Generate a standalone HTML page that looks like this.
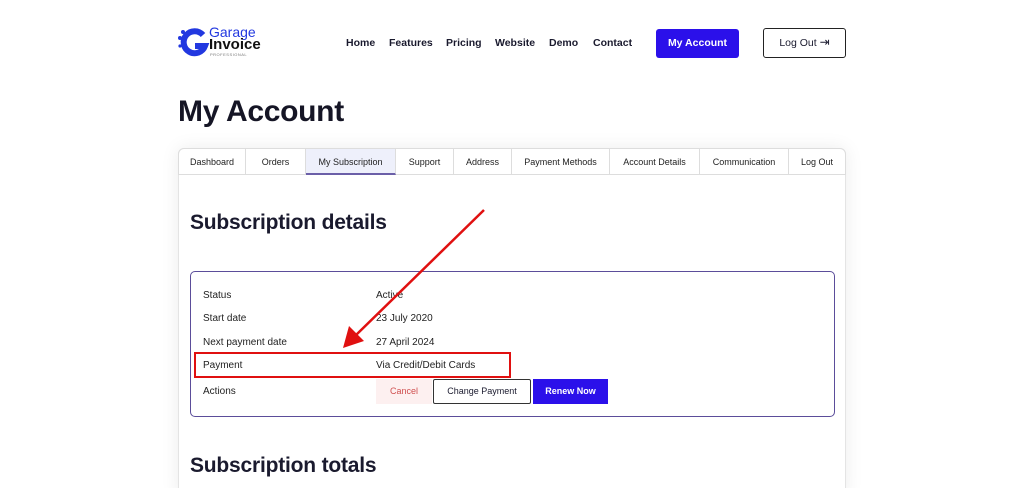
<!DOCTYPE html>
<html><head><meta charset="utf-8"><style>
*{margin:0;padding:0;box-sizing:border-box}
html{width:1024px;height:488px;overflow:hidden}
body{width:1024px;height:488px;overflow:hidden;background:#fff;font-family:"Liberation Sans",sans-serif;color:#1a1a2e;position:relative}
.abs{position:absolute}
.nav a{position:absolute;top:37px;font-size:10.5px;color:#1a1a2e;font-weight:bold;white-space:nowrap}
.tabs{position:absolute;left:178px;top:148px;width:668px;height:27px;border:1px solid #ddd;border-radius:6px 6px 0 0;display:flex;font-size:9px;background:#fff}
.tabs div{height:26px;line-height:26px;text-align:center;border-right:1px solid #ddd;color:#222}
.tabs div:last-child{border-right:none}
.row{position:absolute;font-size:10px;color:#222}
</style></head><body>
<svg class="abs" style="left:177px;top:26px" width="34" height="34" viewBox="0 0 34 34">
<circle cx="3" cy="12" r="2" fill="#2238e0"/><circle cx="6" cy="6" r="2" fill="#2238e0"/><circle cx="3" cy="20" r="1.6" fill="#2238e0"/>
<path d="M26 9 A11 11 0 1 0 28 20 L18 20" fill="none" stroke="#2238e0" stroke-width="6"/>
</svg>
<div class="abs" style="left:209px;top:26px;font-size:14px;color:#2238e0;line-height:13px">Garage</div>
<div class="abs" style="left:209px;top:38px;font-size:15px;font-weight:bold;color:#111;line-height:14px">Invoice</div>
<div class="abs" style="left:210px;top:52px;font-size:4px;color:#777;letter-spacing:0.5px">PROFESSIONAL</div>
<div class="nav">
<a style="left:346px">Home</a><a style="left:389px">Features</a><a style="left:446px">Pricing</a><a style="left:495px">Website</a><a style="left:549px">Demo</a><a style="left:593px">Contact</a>
</div>
<div class="abs" style="left:656px;top:29px;width:83px;height:29px;background:#2b10ea;border-radius:3px;color:#fff;font-size:10.5px;font-weight:bold;text-align:center;line-height:29px">My Account</div>
<div class="abs" style="left:763px;top:28px;width:83px;height:30px;border:1.5px solid #222;border-radius:3px;font-size:10.5px;text-align:center;line-height:27px">Log Out <span style="font-size:12px">⇥</span></div>
<div class="abs" style="left:178px;top:95px;font-size:30px;font-weight:bold;color:#151525;letter-spacing:-0.3px">My Account</div>
<div class="abs" style="left:178px;top:148px;width:668px;height:350px;border:1px solid #e4e4e4;border-radius:6px;box-shadow:0 0 18px rgba(0,0,0,0.08)"></div>
<div class="tabs">
<div style="width:67px">Dashboard</div><div style="width:60px">Orders</div><div style="width:90px;background:#eef0fb;border-bottom:2px solid #6b5fa8">My Subscription</div><div style="width:58px">Support</div><div style="width:58px">Address</div><div style="width:98px">Payment Methods</div><div style="width:90px">Account Details</div><div style="width:89px">Communication</div><div style="flex:1">Log Out</div>
</div>
<div class="abs" style="left:190px;top:211px;font-size:21px;font-weight:bold;color:#1a1a2e;letter-spacing:-0.2px">Subscription details</div>
<div class="abs" style="left:190px;top:271px;width:645px;height:146px;border:1.5px solid #5b4d9a;border-radius:5px"></div>
<div class="row" style="left:203px;top:290px">Status</div><div class="row" style="left:376px;top:290px">Active</div>
<div class="row" style="left:203px;top:313px">Start date</div><div class="row" style="left:376px;top:313px">23 July 2020</div>
<div class="row" style="left:203px;top:337px">Next payment date</div><div class="row" style="left:376px;top:337px">27 April 2024</div>
<div class="row" style="left:203px;top:360px">Payment</div><div class="row" style="left:376px;top:360px">Via Credit/Debit Cards</div>
<div class="row" style="left:203px;top:386px">Actions</div>
<div class="abs" style="left:376px;top:379px;width:56px;height:25px;background:#fdf0f0;color:#d05050;font-size:9px;text-align:center;line-height:25px">Cancel</div>
<div class="abs" style="left:433px;top:379px;width:98px;height:25px;border:1px solid #333;border-radius:2px;font-size:9px;text-align:center;line-height:23px">Change Payment</div>
<div class="abs" style="left:533px;top:379px;width:75px;height:25px;background:#2b10ea;color:#fff;font-size:9px;text-align:center;line-height:25px;font-weight:bold">Renew Now</div>
<div class="abs" style="left:194px;top:352px;width:317px;height:26px;border:2.5px solid #e01010"></div>
<svg class="abs" style="left:0;top:0" width="1024" height="488"><line x1="484" y1="210" x2="355" y2="336" stroke="#e01010" stroke-width="2.5"/><polygon points="343,348 349,326 364,341" fill="#e01010"/></svg>
<div class="abs" style="left:190px;top:454px;font-size:21px;font-weight:bold;color:#1a1a2e;letter-spacing:-0.2px">Subscription totals</div>
</body></html>
